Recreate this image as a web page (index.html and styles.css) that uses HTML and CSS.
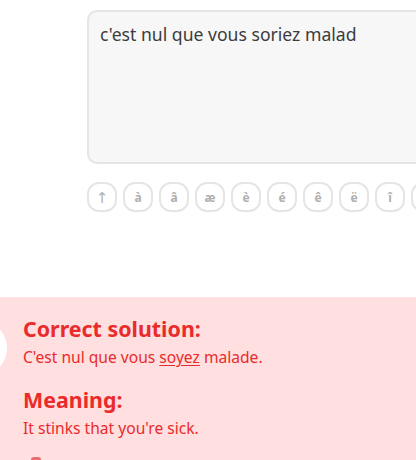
FILE: index.html
```html
<!DOCTYPE html>
<html>
<head>
<meta charset="utf-8">
<link rel="stylesheet" href="styles.css">
</head>
<body>
<div class="page">
  <div class="answer">
    <div class="textbox">c'est nul que vous soriez malad</div>
    <div class="keys">
      <span class="key key-arrow">↑</span>
      <span class="key">à</span>
      <span class="key">â</span>
      <span class="key">æ</span>
      <span class="key">è</span>
      <span class="key">é</span>
      <span class="key">ê</span>
      <span class="key">ë</span>
      <span class="key">î</span>
      <span class="key">ï</span>
    </div>
  </div>
  <div class="result">
    <div class="badge"></div>
    <div class="result-body">
      <h2 class="title">Correct solution:</h2>
      <p class="text">C'est nul que vous <u>soyez</u> malade.</p>
      <h2 class="title title-2">Meaning:</h2>
      <p class="text">It stinks that you're sick.</p>
      <div class="report"></div>
    </div>
  </div>
</div>
</body>
</html>
```
FILE: styles.css
```css
html, body {
  margin: 0;
  padding: 0;
  background: #fff;
  overflow: hidden;
  width: 416px;
  height: 460px;
}
body {
  font-family: "Noto Sans", "DejaVu Sans", sans-serif;
}
.page {
  padding-top: 10px;
}
.answer {
  margin-left: 87px;
  width: 329px;
  overflow: hidden;
}
.textbox {
  box-sizing: border-box;
  width: 340px;
  height: 154px;
  background: #f7f7f7;
  border: 2px solid #e5e5e5;
  border-radius: 10px;
  padding: 8px 11px;
  font-size: 17.6px;
  line-height: 28px;
  color: #3c3c3c;
}
.keys {
  display: flex;
  gap: 6px;
  margin-top: 18px;
}
.key {
  box-sizing: border-box;
  flex: 0 0 30px;
  height: 30px;
  border: 2px solid #e5e5e5;
  border-radius: 12px;
  display: flex;
  align-items: center;
  justify-content: center;
  font-size: 12px;
  font-weight: 700;
  color: #afafaf;
}
.key-arrow {
  font-weight: 400;
  font-size: 15px;
}
.result {
  position: relative;
  margin-top: 85px;
  background: #ffdfe0;
  height: 163px;
  overflow: hidden;
}
.badge {
  position: absolute;
  left: -49px;
  top: 23px;
  width: 56px;
  height: 56px;
  border-radius: 50%;
  background: #fff;
}
.result-body {
  padding: 19px 0 0 23px;
  color: #ea2b2b;
}
.title {
  margin: 0;
  font-size: 21.4px;
  font-weight: 700;
  line-height: 26px;
}
.title-2 {
  margin-top: 19px;
}
.text {
  margin: 4px 0 0;
  font-size: 15.6px;
  line-height: 22px;
}
.text u {
  text-underline-offset: 2px;
}
.report {
  margin: 18px 0 0 8px;
  width: 10px;
  height: 10px;
  border-radius: 3px;
  background: #e96d70;
}
```
